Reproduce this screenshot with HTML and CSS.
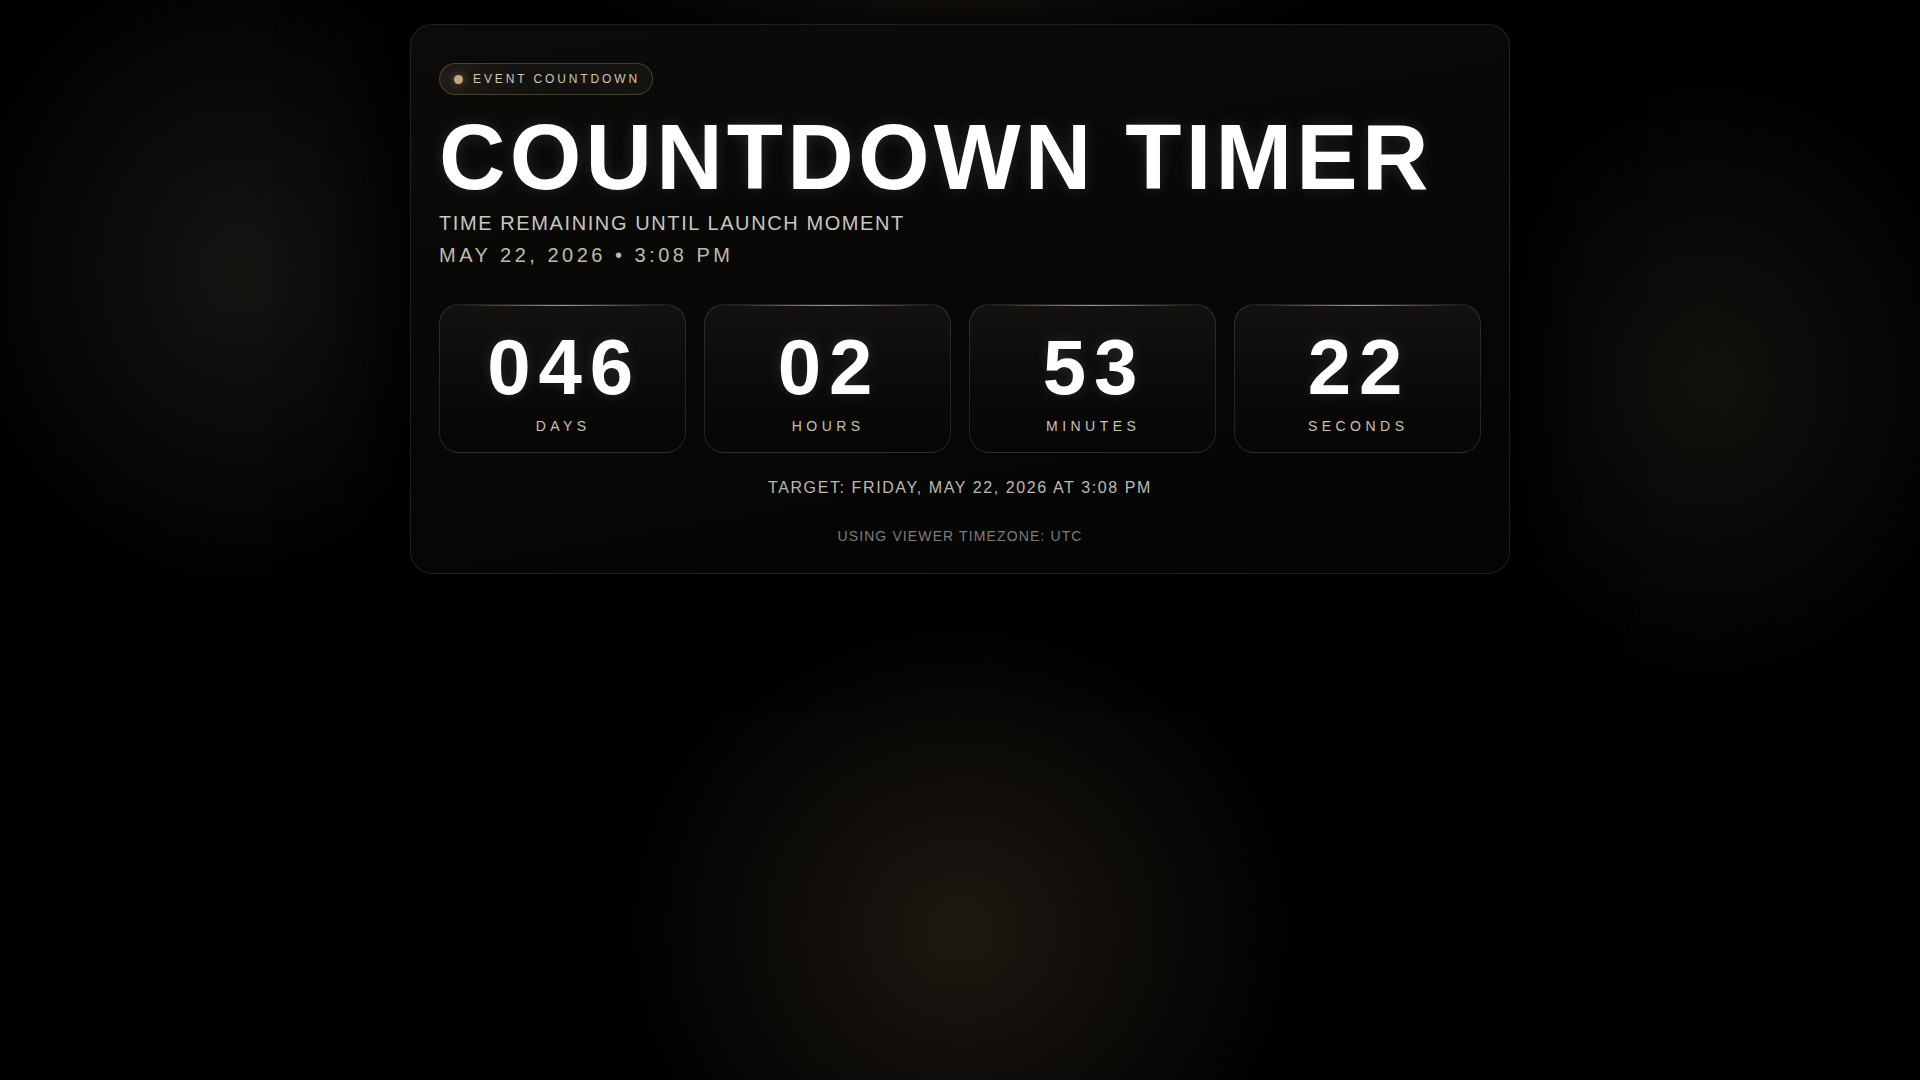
FILE: index.html
```html
<!DOCTYPE html>
<html lang="en">
<head>
<meta charset="utf-8">
<title>Countdown Timer</title>
<link rel="stylesheet" href="styles.css">
</head>
<body>
<main class="page">
  <section class="panel">
    <div class="badge"><span class="badge-dot"></span><span class="badge-text">EVENT COUNTDOWN</span></div>
    <h1 class="title">COUNTDOWN TIMER</h1>
    <p class="subtitle">TIME REMAINING UNTIL LAUNCH MOMENT</p>
    <p class="date">MAY 22, 2026 • 3:08 PM</p>
    <div class="units">
      <div class="unit"><div class="unit-value">046</div><div class="unit-label">DAYS</div></div>
      <div class="unit"><div class="unit-value">02</div><div class="unit-label">HOURS</div></div>
      <div class="unit"><div class="unit-value">53</div><div class="unit-label">MINUTES</div></div>
      <div class="unit"><div class="unit-value">22</div><div class="unit-label">SECONDS</div></div>
    </div>
    <p class="target">TARGET: FRIDAY, MAY 22, 2026 AT 3:08 PM</p>
    <p class="tz">USING VIEWER TIMEZONE: UTC</p>
  </section>
</main>
</body>
</html>
```

FILE: styles.css
```css
* { box-sizing: border-box; }
html, body { margin: 0; padding: 0; }
body {
  min-height: 1080px;
  font-family: "Liberation Sans", Arial, sans-serif;
  color: #fff;
  background-color: #000;
  background-image:
    radial-gradient(ellipse 480px 460px at 960px 930px, rgba(38,32,23,0.75), rgba(0,0,0,0) 72%),
    radial-gradient(ellipse 400px 460px at 240px 270px, rgba(32,29,25,0.7), rgba(0,0,0,0) 72%),
    radial-gradient(ellipse 380px 440px at 1710px 380px, rgba(32,29,23,0.6), rgba(0,0,0,0) 72%),
    radial-gradient(ellipse 560px 150px at 955px 0px, rgba(40,34,26,0.8), rgba(0,0,0,0) 72%);
}
.page {
  display: flex;
  justify-content: center;
  padding-top: 24px;
}
.panel {
  width: 1100px;
  border: 1px solid rgba(255,245,225,0.11);
  border-radius: 22px;
  padding: 38px 28px 29px;
  background: linear-gradient(170deg, #0c0b0a 0%, #070706 50%, #040404 100%);
  box-shadow: 0 0 90px 30px rgba(0,0,0,0.85);
}
.badge {
  display: inline-flex;
  align-items: center;
  height: 32px;
  padding: 0 15px 0 14px;
  border: 1px solid rgba(200,170,120,0.28);
  border-radius: 16px;
  background: linear-gradient(90deg, #1f1b15 0%, #14120f 40%, #141310 100%);
}
.badge-dot {
  width: 9px;
  height: 9px;
  border-radius: 50%;
  background: #c6a87c;
  box-shadow: 0 0 8px rgba(198,168,124,0.55);
  margin-right: 10px;
}
.badge-text {
  font-size: 12px;
  letter-spacing: 0.24em;
  margin-right: -0.24em;
  color: #cfc6b6;
}
.title {
  margin: 16px 0 0;
  font-size: 92px;
  line-height: 1;
  font-weight: 700;
  letter-spacing: 0.046em;
  color: #fff;
  text-shadow: 0 0 16px rgba(255,255,255,0.12);
}
.subtitle {
  margin: 9px 0 0;
  font-size: 20px;
  line-height: 23px;
  letter-spacing: 0.08em;
  color: #c9c6c0;
}
.date {
  margin: 9px 0 0;
  font-size: 20px;
  line-height: 23px;
  letter-spacing: 0.175em;
  color: #c2b9a8;
}
.units {
  display: grid;
  grid-template-columns: repeat(4, 1fr);
  gap: 18px;
  margin-top: 37px;
}
.unit {
  position: relative;
  border: 1px solid rgba(255,245,225,0.12);
  border-radius: 20px;
  padding: 23px 16px 18px;
  background: linear-gradient(180deg, #131210 0%, #0a0a09 55%, #060606 100%);
  text-align: center;
  overflow: hidden;
}
.unit::before {
  content: "";
  position: absolute;
  top: 0;
  left: 8%;
  right: 8%;
  height: 1px;
  background: linear-gradient(90deg, rgba(200,170,120,0), rgba(205,175,125,0.85) 50%, rgba(200,170,120,0));
}
.unit-value {
  font-size: 78px;
  line-height: 78px;
  font-weight: 700;
  letter-spacing: 0.1em;
  padding-left: 0.04em;
  color: #fff;
  text-shadow: 0 0 14px rgba(255,255,255,0.12);
}
.unit-label {
  margin-top: 12px;
  font-size: 14px;
  line-height: 16px;
  letter-spacing: 0.32em;
  padding-left: 0.1em;
  color: #c9c0b0;
}
.target {
  margin: 26px 0 0;
  text-align: center;
  font-size: 16px;
  line-height: 18px;
  letter-spacing: 0.1em;
  color: #bdb9b2;
}
.tz {
  margin: 31px 0 0;
  text-align: center;
  font-size: 14px;
  line-height: 16px;
  letter-spacing: 0.08em;
  color: #7f7c77;
}
```
